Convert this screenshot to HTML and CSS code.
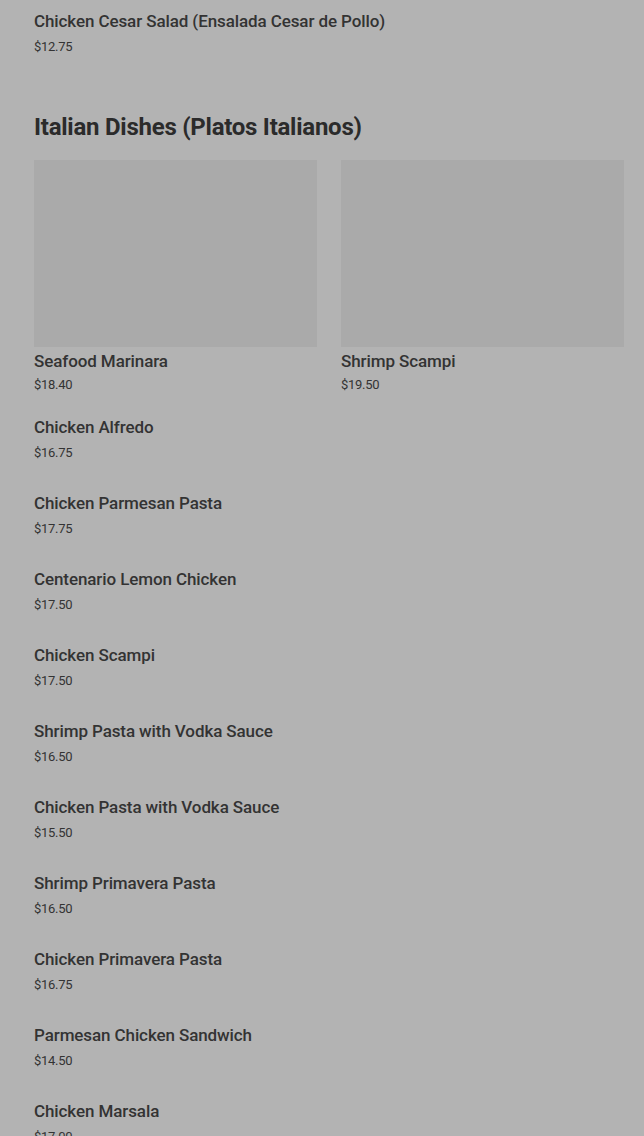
FILE: index.html
```html
<!DOCTYPE html>
<html>
<head>
<meta charset="utf-8">
<link rel="stylesheet" href="styles.css">
</head>
<body>
<div class="page">
  <div class="item">
    <div class="name">Chicken Cesar Salad (Ensalada Cesar de Pollo)</div>
    <div class="price">$12.75</div>
  </div>

  <h2 class="heading">Italian Dishes (Platos Italianos)</h2>

  <div class="cards">
    <div class="card">
      <div class="thumb"></div>
      <div class="card-name">Seafood Marinara</div>
      <div class="card-price">$18.40</div>
    </div>
    <div class="card">
      <div class="thumb"></div>
      <div class="card-name">Shrimp Scampi</div>
      <div class="card-price">$19.50</div>
    </div>
  </div>

  <div class="list">
    <div class="item"><div class="name">Chicken Alfredo</div><div class="price">$16.75</div></div>
    <div class="item"><div class="name">Chicken Parmesan Pasta</div><div class="price">$17.75</div></div>
    <div class="item"><div class="name">Centenario Lemon Chicken</div><div class="price">$17.50</div></div>
    <div class="item"><div class="name">Chicken Scampi</div><div class="price">$17.50</div></div>
    <div class="item"><div class="name">Shrimp Pasta with Vodka Sauce</div><div class="price">$16.50</div></div>
    <div class="item"><div class="name">Chicken Pasta with Vodka Sauce</div><div class="price">$15.50</div></div>
    <div class="item"><div class="name">Shrimp Primavera Pasta</div><div class="price">$16.50</div></div>
    <div class="item"><div class="name">Chicken Primavera Pasta</div><div class="price">$16.75</div></div>
    <div class="item"><div class="name">Parmesan Chicken Sandwich</div><div class="price">$14.50</div></div>
    <div class="item"><div class="name">Chicken Marsala</div><div class="price">$17.00</div></div>
  </div>
</div>
</body>
</html>
```

FILE: styles.css
```css
html, body {
  margin: 0;
  padding: 0;
  background: #b3b3b3;
}

body {
  font-family: Roboto, "Liberation Sans", sans-serif;
  color: #2f2f2f;
}

.page {
  padding: 0 20px 0 34px;
}

.item {
  padding: 11px 0 19px;
}

.name,
.card-name {
  font-size: 17px;
  line-height: 20px;
  font-weight: 500;
  letter-spacing: -0.1px;
  color: #333333;
}

.price,
.card-price {
  font-size: 13px;
  line-height: 20px;
  color: #333333;
  letter-spacing: -0.3px;
}

.price {
  margin-top: 6px;
}

.heading {
  margin: 35px 0 17px;
  font-size: 24px;
  line-height: 32px;
  font-weight: 700;
  color: #2b2b2b;
  letter-spacing: -0.25px;
}

.cards {
  display: grid;
  grid-template-columns: 1fr 1fr;
  gap: 24px;
  margin-bottom: 22px;
}

.thumb {
  height: 187px;
  background: #aaaaaa;
}

.card-name {
  margin-top: 4px;
}

.card-price {
  margin-top: 4px;
}

.list .item:first-child {
  padding-top: 0;
}
```
